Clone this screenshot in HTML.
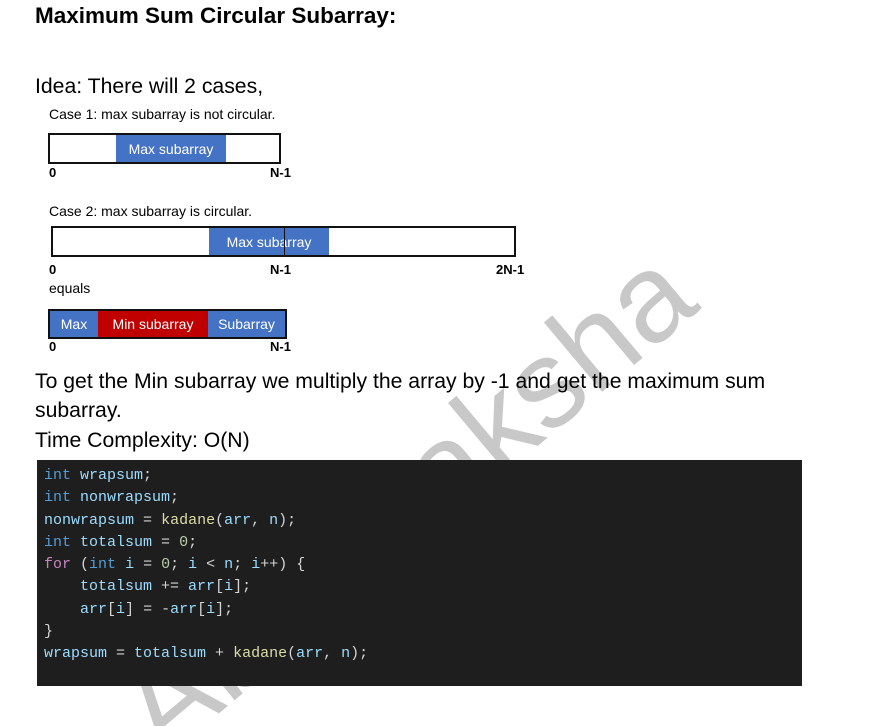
<!DOCTYPE html>
<html><head><meta charset="utf-8"><style>
*{margin:0;padding:0;box-sizing:border-box}
html,body{overflow:hidden}
body{width:873px;height:726px;background:#fff;position:relative;overflow:hidden;font-family:"Liberation Sans",sans-serif;color:#000}
.a{position:absolute;white-space:nowrap}
.t{font-size:14px}
.b{font-weight:bold;font-size:13px}
.box{position:absolute;border:2px solid #111;background:#fff}
.seg{position:absolute;top:0;bottom:0;color:#fff;font-size:14px;display:flex;align-items:center;justify-content:center}
.bl{background:#4472c4}.rd{background:#c00000}
.code{position:absolute;left:37px;top:460px;width:765px;height:226px;background:#1e1e1e;font-family:"Liberation Mono",monospace;font-size:15px;color:#9cdcfe;padding:5px 0 0 7px;line-height:22.3px;z-index:2}
.k{color:#569cd6}.f{color:#dcdcaa}.n{color:#b5cea8}.p{color:#c586c0}.w{color:#d4d4d4}
svg.wm{position:absolute;left:0;top:0;z-index:1;overflow:hidden}
.fg{position:relative;z-index:3}
</style></head><body>
<svg class="wm" width="873" height="726" viewBox="0 0 873 726"><text x="702" y="308" transform="rotate(-40 702 308)" text-anchor="end" font-family="Liberation Sans, sans-serif" font-size="125" fill="#c8c8c8">Abhi Kaksha</text></svg>
<div class="fg">
<div class="a" style="left:35px;top:3px;font-size:22.5px;font-weight:bold">Maximum Sum Circular Subarray:</div>
<div class="a" style="left:35px;top:75px;font-size:21.2px">Idea: There will 2 cases,</div>
<div class="a t" style="left:49px;top:106px">Case 1: max subarray is not circular.</div>
<div class="box" style="left:48px;top:133px;width:233px;height:31px"><div class="seg bl" style="left:66px;width:110px">Max subarray</div></div>
<div class="a b" style="left:49px;top:165px">0</div>
<div class="a b" style="left:270px;top:165px">N-1</div>
<div class="a t" style="left:49px;top:203px">Case 2: max subarray is circular.</div>
<div class="box" style="left:51px;top:226px;width:465px;height:31px"><div class="seg bl" style="left:156px;width:120px">Max subarray</div><div style="position:absolute;left:231px;top:0;bottom:0;width:1px;background:#111"></div></div>
<div class="a b" style="left:49px;top:262px">0</div>
<div class="a b" style="left:270px;top:262px">N-1</div>
<div class="a b" style="left:496px;top:262px">2N-1</div>
<div class="a t" style="left:49px;top:280px">equals</div>
<div class="box" style="left:48px;top:309px;width:239px;height:30px"><div class="seg bl" style="left:0;width:48px">Max</div><div class="seg rd" style="left:48px;width:110px">Min subarray</div><div class="seg bl" style="left:158px;width:77px">Subarray</div></div>
<div class="a b" style="left:49px;top:339px">0</div>
<div class="a b" style="left:270px;top:339px">N-1</div>
<div class="a" style="left:35px;top:370px;font-size:21.2px">To get the Min subarray we multiply the array by -1 and get the maximum sum</div>
<div class="a" style="left:35px;top:399px;font-size:21.2px">subarray.</div>
<div class="a" style="left:35px;top:429px;font-size:21.2px">Time Complexity: O(N)</div>
</div>
<div class="code"><span class="k">int</span> wrapsum<span class="w">;</span><br><span class="k">int</span> nonwrapsum<span class="w">;</span><br>nonwrapsum <span class="w">=</span> <span class="f">kadane</span><span class="w">(</span>arr<span class="w">,</span> n<span class="w">);</span><br><span class="k">int</span> totalsum <span class="w">=</span> <span class="n">0</span><span class="w">;</span><br><span class="p">for</span> <span class="w">(</span><span class="k">int</span> i <span class="w">=</span> <span class="n">0</span><span class="w">;</span> i <span class="w">&lt;</span> n<span class="w">;</span> i<span class="w">++) {</span><br>&nbsp;&nbsp;&nbsp;&nbsp;totalsum <span class="w">+=</span> arr<span class="w">[</span>i<span class="w">];</span><br>&nbsp;&nbsp;&nbsp;&nbsp;arr<span class="w">[</span>i<span class="w">]</span> <span class="w">=</span> <span class="w">-</span>arr<span class="w">[</span>i<span class="w">];</span><br><span class="w">}</span><br>wrapsum <span class="w">=</span> totalsum <span class="w">+</span> <span class="f">kadane</span><span class="w">(</span>arr<span class="w">,</span> n<span class="w">);</span></div>
</body></html>
